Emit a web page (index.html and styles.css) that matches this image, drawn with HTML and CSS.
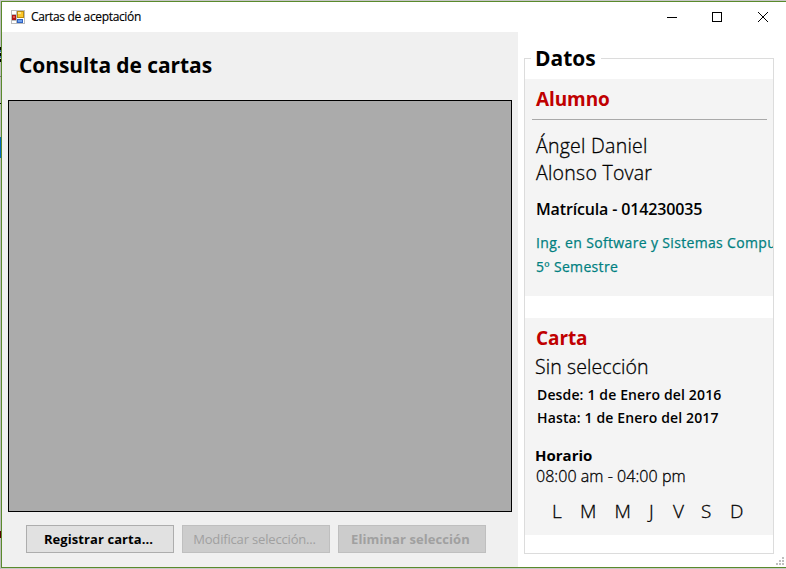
FILE: index.html
```html
<!DOCTYPE html>
<html lang="es">
<head>
<meta charset="utf-8">
<title>Cartas de aceptación</title>
<link rel="stylesheet" href="styles.css">
</head>
<body>
<div class="backdrop"><i class="mark m1"></i><i class="mark m2"></i><i class="mark m3"></i><i class="mark m4"></i><i class="mark m5"></i></div>
<main class="window">
  <header class="titlebar">
    <svg class="app-icon" width="14" height="14" viewBox="0 0 14 14" shape-rendering="crispEdges">
      <path fill="#fff" stroke="#bcbcbc" d="M.5.5h13v13H.5zM.5 4.500h5M5.500 .5v13M.5 10.500h5"/>
      <path fill="#b01818" d="M1 5h4v5H1z"/><path fill="#e05a4a" d="M2 6h2v2H2z"/>
      <path fill="#b98a10" d="M6 1h7v7H6z"/><path fill="#fbc72d" d="M7 2h5v5H7z"/><path fill="#ffe58a" d="M7 2h3v2H7z"/>
      <path fill="#2f62c0" d="M6 9h6v4H6z"/><path fill="#6ea0ee" d="M7 10h4v2H7z"/>
    </svg>
    <span class="caption">Cartas de aceptación</span>
    <svg class="controls" width="103" height="12" viewBox="0 0 103 12" fill="none" stroke="#000">
      <path shape-rendering="crispEdges" d="M0 6.500h10M45.500 1.500h9v9h-9z"/>
      <path d="M91 1l10 10M101 1L91 11"/>
    </svg>
  </header>
  <div class="content">
    <section class="query">
      <h1><span>Consulta de cartas</span></h1>
      <div class="grid"></div>
      <div class="actions">
        <button class="primary">Registrar carta...</button>
        <button class="light" disabled>Modificar selección...</button>
        <button disabled>Eliminar selección</button>
      </div>
    </section>
    <section class="side">
      <div class="group">
        <h2><span>Datos</span></h2>
        <div class="panel student">
          <h3>Alumno</h3>
          <div class="rule"></div>
          <p class="name">Ángel Daniel</p>
          <p class="name">Alonso Tovar</p>
          <p class="enrol">Matrícula - 014230035</p>
          <p class="career">Ing. en Software y Sistemas Computacionales</p>
          <p class="career">5º Semestre</p>
        </div>
        <div class="panel letter">
          <h3>Carta</h3>
          <p class="name status">Sin selección</p>
          <p class="date">Desde: 1 de Enero del 2016</p>
          <p class="date until">Hasta: 1 de Enero del 2017</p>
          <p class="schedule">Horario</p>
          <p class="hours">08:00 am - 04:00 pm</p>
          <div class="days"><span>L</span><span>M</span><span>M</span><span>J</span><span>V</span><span>S</span><span>D</span></div>
        </div>
      </div>
      <svg class="grip" width="8" height="8" viewBox="0 0 8 8" fill="#bfbfbf"><path d="M6 0h2v2H6zM3 3h2v2H3zM6 3h2v2H6zM0 6h2v2H0zM3 6h2v2H3zM6 6h2v2H6z"/></svg>
    </section>
  </div>
</main>
</body>
</html>
```
FILE: styles.css
```css
* { box-sizing: border-box; }
body { margin: 0; width: 786px; height: 569px; overflow: hidden; background: #c8c8c8; font-family: "Open Sans", sans-serif; color: #000; display: flex; padding-top: 1px; }
h1, h2, h3, p { margin: 0; font-weight: 400; white-space: nowrap; }
.backdrop { width: 1px; height: 568px; flex: none; background: #bdbdbd; }
.mark { display: block; height: 1px; background: #777; }
.m1 { margin-top: 46px; height: 15px; background: repeating-linear-gradient(#000 0 3px, #3b6f9c 3px 5px, #ccc 5px 6px); }
.m2 { margin-top: 14px; }
.m3 { margin-top: 26px; background: #000; }
.m4 { margin-top: 33px; height: 21px; background: #0067c0; }
.m5 { margin-top: 373px; height: 7px; background: #500; }
.window { width: 785px; height: 567px; border: 1px solid #5a8a2c; border-right: 0; background: #fff; }
.titlebar { height: 30px; display: flex; align-items: center; padding: 0 16px 1px 9px; }
.caption { font-size: 12px; line-height: 30px; margin: 1px 0 0 6px; letter-spacing: -.35px; -webkit-text-stroke: .15px #000; }
.controls { margin-left: auto; }
.content { display: flex; height: 535px; }
.query { width: 516px; background: #f0f0f0; padding: 0 6px; }
h1 { height: 68px; line-height: 66px; font-size: 21px; font-weight: 700; padding-left: 11px; letter-spacing: -.08px; }
.grid { width: 504px; height: 412px; background: #ababab; border: 1px solid #000; }
.actions { display: flex; gap: 8px; padding: 13px 0 0 18px; }
button { width: 148px; height: 28px; border: 1px solid #bfbfbf; padding: 0 3px 0 0; background: #ccc; color: #a0a0a0; font: 700 13px/26px "Open Sans", sans-serif; letter-spacing: .08px; white-space: nowrap; }
.primary { background: #e1e1e1; border-color: #adadad; color: #000; }
.light { font-weight: 400; letter-spacing: -.17px; }
.side { flex: 1; padding: 26px 0 0 6px; position: relative; }
.group { width: 250px; height: 496px; border: 1px solid #dcdcdc; }
h2 { height: 20px; line-height: 18px; font-size: 21px; font-weight: 700; margin-top: -10px; margin-bottom: 10px; padding-left: 6px; }
h2 span { display: inline-block; background: #fff; width: 70px; padding-left: 4px; }
.panel { height: 217px; background: #f4f4f4; overflow: hidden; padding-left: 11px; }
.letter { margin-top: 22px; padding-left: 10px; }
h3 { height: 40px; line-height: 40px; font-size: 19px; font-weight: 700; color: #c00000; letter-spacing: -.1px; }
.rule { height: 1px; width: 235px; margin-left: -4px; background: #a9a9a9; margin-bottom: 12px; }
.name { font-size: 19.5px; font-weight: 300; height: 27px; line-height: 28px; letter-spacing: .25px; }
.name, .hours, .days { -webkit-text-stroke: .3px #000; }
.enrol { font-size: 16px; font-weight: 600; height: 24px; line-height: 24px; margin: 11px 0 9px; letter-spacing: -.15px; }
.career { font-size: 14px; font-weight: 400; color: #008080; height: 24px; line-height: 26px; letter-spacing: .34px; -webkit-text-stroke: .25px #008080; }
.letter h3 { height: 35px; padding-left: 1px; }
.date { font-size: 14px; font-weight: 600; height: 23px; line-height: 23px; padding-left: 2px; letter-spacing: .14px; }
.letter .status { margin-bottom: 3px; letter-spacing: .1px; }
.schedule { font-size: 15px; font-weight: 700; height: 20px; line-height: 20px; margin-top: 16px; }
.hours { font-size: 16px; font-weight: 300; height: 22px; line-height: 22px; padding-left: 1px; letter-spacing: .05px; }
.days { display: flex; font-size: 19px; font-weight: 300; line-height: 28px; margin-top: 10px; padding-left: 17px; }
.days span { width: 28px; }
.days span:nth-child(2), .days span:nth-child(3) { width: 34.5px; }
.days span:nth-child(4) { width: 24px; }
.days span:nth-child(6) { width: 29px; }
.grip { position: absolute; right: 2px; bottom: 2px; }
```
